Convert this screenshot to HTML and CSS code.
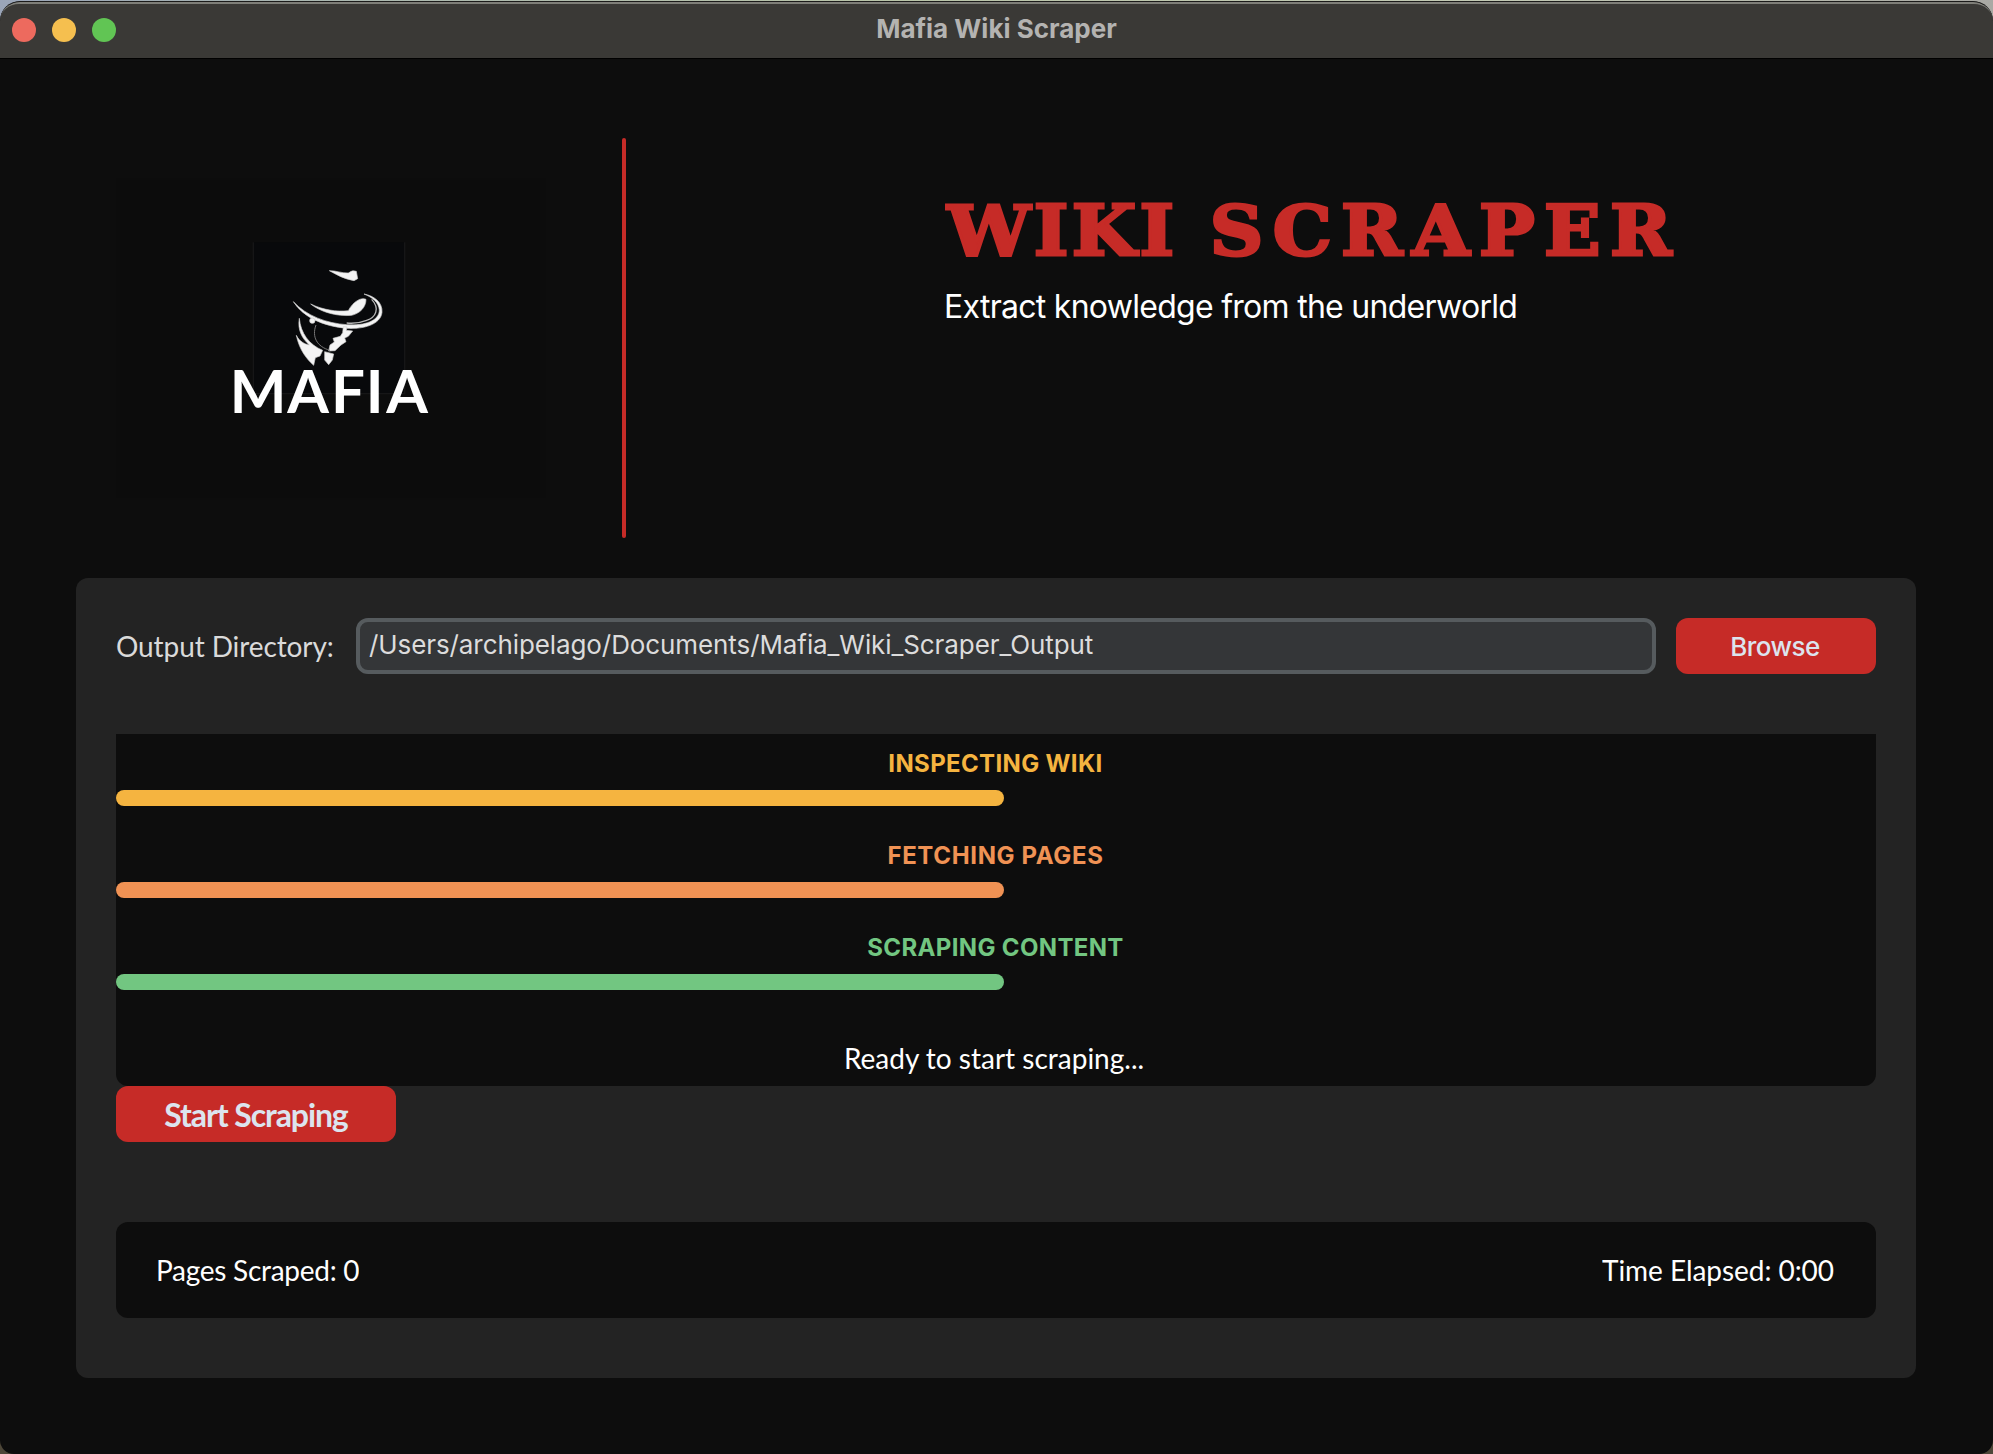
FILE: index.html
```html
<!DOCTYPE html>
<html lang="en">
<head>
<meta charset="utf-8">
<title>Mafia Wiki Scraper</title>
<link rel="stylesheet" href="styles.css">
</head>
<body>
<div class="window">
  <header class="titlebar">
    <div class="lights"><i class="light red"></i><i class="light amber"></i><i class="light green"></i></div>
    <span class="window-title">Mafia Wiki Scraper</span>
  </header>
  <main class="content">
    <section class="hero">
      <svg class="logo" viewBox="-312 -156 1290 960" aria-label="Mafia">
        <rect x="-312" y="-156" width="1290" height="960" fill="#0c0c0c"/>
        <rect x="100" y="37" width="454" height="454" fill="#08090b"/>
        <path d="M100 37V491H554V37" fill="none" stroke="#161617" stroke-width="4"/>
        <g fill="#f4f4f4" stroke="#d0d0d0" stroke-width="2">
          <path d="M328 122C350 122 366 130 385 129Q398 118 409 124L413 146L402 152C372 147 350 134 328 122Z"/>
          <path d="M272 222C310 240 350 246 385 242C398 216 424 200 438 208C438 232 420 250 395 256C350 260 302 246 272 222Z"/>
          <path d="M220 215C260 258 320 280 380 284C435 288 478 272 478 240C476 217 457 202 432 192C464 198 488 218 486 247C482 284 430 298 380 295C310 289 250 262 220 215Z"/>
          <circle cx="277" cy="272" r="8"/>
          <path d="M238 265C242 310 268 345 308 361L300 378L286 383L281 406C260 387 238 360 229 316C238 334 254 343 268 345C246 325 232 300 238 265Z"/>
          <path d="M370 290L381 291L379 301L398 303L385 319L374 324L378 335L363 345L345 362L326 363L330 345L343 336L339 325L361 319L368 308Z"/>
          <path d="M314 365L341 372L337 390L326 404L314 390Z"/>
        </g>
        <path d="M455 208C480 235 468 262 440 271C420 279 400 281 380 279" fill="none" stroke="#b5b5b5" stroke-width="4"/>
        <path d="M288 285C275 320 290 350 330 361" fill="none" stroke="#777" stroke-width="3"/>
        <text class="logo-word" x="29 202 333 437 499" y="549">MAFIA</text>
      </svg>
      <div class="divider"></div>
      <div class="headline">
        <h1><span class="wiki">WIKI</span> <span class="scraper">SCRAPER</span></h1>
        <p>Extract knowledge from the underworld</p>
      </div>
    </section>
    <section class="panel">
      <div class="directory">
        <label for="dir">Output Directory:</label>
        <div class="field" id="dir">/Users/archipelago/Documents/Mafia_Wiki_Scraper_Output</div>
        <button class="button browse">Browse</button>
      </div>
      <div class="progress">
        <div class="stage inspecting"><span>INSPECTING WIKI</span><div class="bar"></div></div>
        <div class="stage fetching"><span>FETCHING PAGES</span><div class="bar"></div></div>
        <div class="stage content-stage"><span>SCRAPING CONTENT</span><div class="bar"></div></div>
        <p class="status">Ready to start scraping...</p>
      </div>
      <button class="button start"><span>Start Scraping</span></button>
      <div class="stats"><span class="pages">Pages Scraped: 0</span><span class="time">Time Elapsed: 0:00</span></div>
    </section>
  </main>
</div>
</body>
</html>
```
FILE: styles.css
```css
* { box-sizing: border-box; margin: 0; }
html { height: 100%; }
body {
  height: 1454px;
  padding-top: 1px;
  overflow: hidden;
  background: linear-gradient(90deg, #9aa5b8, #a9b6b0 15%, #b9c4a8 45%, #c2c9b4 75%, #a9a9a4) top / 100% 30px no-repeat, #4d4638;
  font-family: Inter, "Liberation Sans", sans-serif;
}
.window {
  display: flex;
  flex-direction: column;
  height: 1453px;
  overflow: hidden;
  background: #0d0d0d;
  border-top: 1px solid #1b1b1a;
  border-radius: 20px 20px 14px 14px;
}
.titlebar {
  display: grid;
  grid-template-columns: 1fr auto 1fr;
  align-items: center;
  height: 57px;
  padding: 0 12px 2px;
  background: #3a3936;
  border-top: 2px solid #7f7f79;
  border-bottom: 1px solid #000;
  border-radius: 19px 19px 0 0;
}
.lights { display: flex; gap: 16px; }
.light { width: 24px; height: 24px; border-radius: 50%; }
.red { background: #ed6a5e; }
.amber { background: #f5bf4f; }
.green { background: #61c554; }
.window-title {
  padding-bottom: 3px;
  font-size: 26px;
  font-weight: 700;
  color: #b4b3b1;
}
.content { padding: 79px 77px 76px 76px; }
.hero { display: flex; height: 400px; margin-bottom: 40px; padding-left: 40px; }
.logo { width: 430px; height: 320px; margin-top: 40px; }
.logo-word { font: 700 180px Lato, "Liberation Sans", sans-serif; fill: #fff; }
.divider { width: 4px; margin-left: 76px; border-radius: 2px; background: #c62b27; }
.headline { padding: 51px 0 0 318px; }
h1 {
  padding-left: 3px;
  font: 700 70px/84px "DejaVu Serif", serif;
  letter-spacing: 6px;
  color: #c62b27;
  -webkit-text-stroke: 3px #c62b27;
  white-space: nowrap;
  transform: scaleX(1.06);
  transform-origin: left;
}
.wiki { letter-spacing: 3.1px; }
.scraper { letter-spacing: 8.8px; }
.headline p {
  margin-top: 14px;
  font-size: 32px;
  line-height: 40px;
  letter-spacing: -0.72px;
  color: #fff;
}
.panel { height: 800px; padding: 40px; background: #232323; border-radius: 12px; }
.directory { display: flex; gap: 20px; height: 56px; margin-bottom: 60px; }
.directory label {
  width: 220px;
  font: 400 28px/57px Lato, "Liberation Sans", sans-serif;
  letter-spacing: -0.1px;
  color: #dadada;
  white-space: nowrap;
}
.field {
  flex: 1;
  padding-left: 9px;
  border: 4px solid #565b5e;
  border-radius: 12px;
  background: #343638;
  font-size: 26px;
  line-height: 45px;
  letter-spacing: -0.09px;
  color: #dcdcdc;
}
.button {
  display: block;
  height: 56px;
  padding: 0;
  border: 0;
  border-radius: 12px;
  background: #c62b27;
  color: #dce4ee;
}
.browse { width: 200px; padding: 1px 2px 0 0; font: 500 26px Inter, sans-serif; letter-spacing: -0.5px; }
.progress { height: 352px; padding-top: 15px; background: #0d0d0d; border-radius: 0 0 12px 12px; }
.stage {
  height: 92px;
  font-size: 24px;
  font-weight: 700;
  line-height: 30px;
  letter-spacing: 0.35px;
  text-align: center;
}
.stage span { display: block; padding-right: 1px; }
.bar { width: 888px; height: 16px; margin-top: 11px; border-radius: 8px; background: currentColor; }
.inspecting { color: #f5b440; }
.fetching { color: #f09254; letter-spacing: 0.65px; }
.content-stage { color: #72c681; }
.status {
  height: 33px;
  margin-top: 16px;
  padding-right: 4px;
  overflow: hidden;
  font: 400 28px/35px Lato, "Liberation Sans", sans-serif;
  color: #fff;
  text-align: center;
}
.start { width: 280px; font: 700 32px Lato, "Liberation Sans", sans-serif; letter-spacing: -1.1px; }
.start span { display: block; height: 40px; line-height: 42px; overflow: hidden; }
.stats {
  display: flex;
  justify-content: space-between;
  align-items: center;
  height: 96px;
  margin-top: 80px;
  padding: 0 42px 0 40px;
  border-radius: 12px;
  background: #0d0d0d;
  font: 400 28px/32px Lato, "Liberation Sans", sans-serif;
  color: #fff;
}
.stats span { height: 32px; overflow: hidden; }
.pages { letter-spacing: -0.27px; }
.time { letter-spacing: -0.05px; }
```
